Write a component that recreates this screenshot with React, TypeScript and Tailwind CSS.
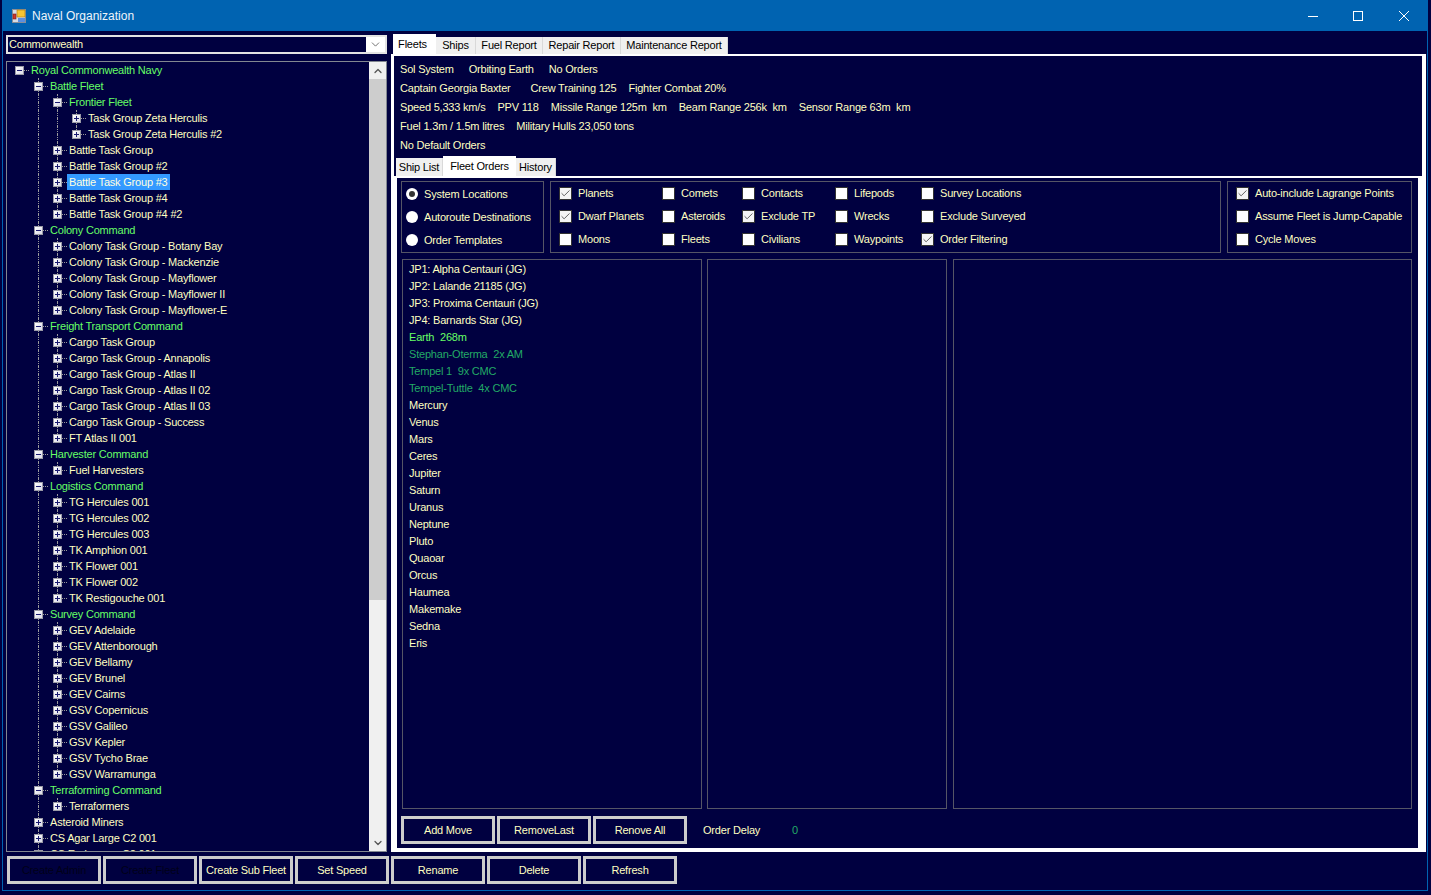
import { Check, ChevronDown, ChevronUp } from "lucide-react";

const font = "font-['Liberation_Sans',Arial,sans-serif]";

type Node = { label: string; depth: number; open?: boolean; green?: boolean; selected?: boolean };

const tree: Node[] = [
  { label: "Royal Commonwealth Navy", depth: 0, open: true, green: true },
  { label: "Battle Fleet", depth: 1, open: true, green: true },
  { label: "Frontier Fleet", depth: 2, open: true, green: true },
  { label: "Task Group Zeta Herculis", depth: 3 },
  { label: "Task Group Zeta Herculis #2", depth: 3 },
  { label: "Battle Task Group", depth: 2 },
  { label: "Battle Task Group #2", depth: 2 },
  { label: "Battle Task Group #3", depth: 2, selected: true },
  { label: "Battle Task Group #4", depth: 2 },
  { label: "Battle Task Group #4 #2", depth: 2 },
  { label: "Colony Command", depth: 1, open: true, green: true },
  { label: "Colony Task Group - Botany Bay", depth: 2 },
  { label: "Colony Task Group - Mackenzie", depth: 2 },
  { label: "Colony Task Group - Mayflower", depth: 2 },
  { label: "Colony Task Group - Mayflower II", depth: 2 },
  { label: "Colony Task Group - Mayflower-E", depth: 2 },
  { label: "Freight Transport Command", depth: 1, open: true, green: true },
  { label: "Cargo Task Group", depth: 2 },
  { label: "Cargo Task Group - Annapolis", depth: 2 },
  { label: "Cargo Task Group - Atlas II", depth: 2 },
  { label: "Cargo Task Group - Atlas II 02", depth: 2 },
  { label: "Cargo Task Group - Atlas II 03", depth: 2 },
  { label: "Cargo Task Group - Success", depth: 2 },
  { label: "FT Atlas II 001", depth: 2 },
  { label: "Harvester Command", depth: 1, open: true, green: true },
  { label: "Fuel Harvesters", depth: 2 },
  { label: "Logistics Command", depth: 1, open: true, green: true },
  { label: "TG Hercules 001", depth: 2 },
  { label: "TG Hercules 002", depth: 2 },
  { label: "TG Hercules 003", depth: 2 },
  { label: "TK Amphion 001", depth: 2 },
  { label: "TK Flower 001", depth: 2 },
  { label: "TK Flower 002", depth: 2 },
  { label: "TK Restigouche 001", depth: 2 },
  { label: "Survey Command", depth: 1, open: true, green: true },
  { label: "GEV Adelaide", depth: 2 },
  { label: "GEV Attenborough", depth: 2 },
  { label: "GEV Bellamy", depth: 2 },
  { label: "GEV Brunel", depth: 2 },
  { label: "GEV Cairns", depth: 2 },
  { label: "GSV Copernicus", depth: 2 },
  { label: "GSV Galileo", depth: 2 },
  { label: "GSV Kepler", depth: 2 },
  { label: "GSV Tycho Brae", depth: 2 },
  { label: "GSV Warramunga", depth: 2 },
  { label: "Terraforming Command", depth: 1, open: true, green: true },
  { label: "Terraformers", depth: 2 },
  { label: "Asteroid Miners", depth: 1 },
  { label: "CS Agar Large C2 001", depth: 1 },
  { label: "CS Endeavour C2 001", depth: 1 },
];

const depthPad = ["pl-[8px]", "pl-[27px]", "pl-[46px]", "pl-[65px]"];
const guideLeft = ["", "left-[31px]", "left-[50px]", "left-[69px]"];

function Expander({ open }: { open?: boolean }) {
  return (
    <span className="relative h-[9px] w-[9px] shrink-0 border border-[#9a9aa6] bg-gradient-to-br from-white to-[#d8d8e6]">
      <span className="absolute left-[1px] top-[3px] h-[1px] w-[5px] bg-[#1a1a70]" />
      {!open && <span className="absolute left-[3px] top-[1px] h-[5px] w-[1px] bg-[#1a1a70]" />}
    </span>
  );
}

function TreeRow({ node, next }: { node: Node; next?: Node }) {
  return (
    <div className={`relative flex h-4 items-center ${depthPad[node.depth]}`}>
      {[1, 2, 3].map((level) =>
        node.depth >= level ? (
          <span key={level}>
            <span className={`absolute top-0 h-1/2 border-l border-dotted border-[#9a9a9a] ${guideLeft[level]}`} />
            {next && next.depth >= level && (
              <span className={`absolute top-1/2 h-1/2 border-l border-dotted border-[#9a9a9a] ${guideLeft[level]}`} />
            )}
          </span>
        ) : null,
      )}
      <Expander open={node.open} />
      <span className="h-[1px] w-[5px] shrink-0 border-t border-dotted border-[#9a9a9a]" />
      <span
        className={`whitespace-nowrap px-[2px] leading-4 ${
          node.selected ? "bg-[#3399ff] text-[#ffffe0]" : node.green ? "text-[#66ff66]" : "text-[#ffffc0]"
        }`}
      >
        {node.label}
      </span>
    </div>
  );
}

function FormButton({ label, dim }: { label: string; dim?: boolean }) {
  return (
    <button
      type="button"
      className={`h-[28px] w-[94px] whitespace-nowrap border-[3px] border-[#cccccc] text-center ${dim ? "text-[#000018]" : "text-[#ffffc0]"}`}
    >
      {label}
    </button>
  );
}

function CheckBox({ label, checked }: { label: string; checked?: boolean }) {
  return (
    <label className="flex h-[23px] items-center gap-[6px] whitespace-nowrap text-[#ffffc0]">
      <span className={`flex h-[13px] w-[13px] shrink-0 items-center justify-center border border-[#333333] ${checked ? "bg-[#f4f4f4]" : "bg-white"}`}>
        {checked && <Check size={11} strokeWidth={1.8} className="text-[#444444]" />}
      </span>
      {label}
    </label>
  );
}

function Radio({ label, checked }: { label: string; checked?: boolean }) {
  return (
    <label className="flex h-[23px] items-center gap-[6px] whitespace-nowrap text-[#ffffc0]">
      <span className="-mt-[1px] flex h-[12px] w-[12px] shrink-0 items-center justify-center rounded-full bg-white">
        {checked && <span className="h-[6px] w-[6px] rounded-full bg-[#333333]" />}
      </span>
      {label}
    </label>
  );
}

function MainTab({ label, active, w }: { label: string; active?: boolean; w: string }) {
  return (
    <div
      className={`flex items-center justify-center whitespace-nowrap text-black ${w} ${
        active ? "z-10 -mb-[1px] h-[21px] bg-white pb-[1px] pr-[4px]" : "h-[17px] border-r border-[#d9d9d9] bg-[#f0f0f0]"
      }`}
    >
      {label}
    </div>
  );
}

function SubTab({ label, active, w }: { label: string; active?: boolean; w: string }) {
  return (
    <div
      className={`flex items-center justify-center whitespace-nowrap text-black ${w} ${
        active ? "z-10 -mb-[2px] h-[22px] bg-white pb-[2px]" : "h-[18px] border-r border-[#d9d9d9] bg-[#f0f0f0]"
      }`}
    >
      {label}
    </div>
  );
}

const yellow = "text-[#ffffc0]";
const bright = "text-[#66ff66]";
const dark = "text-[#22aa66]";

const systemBodies: [string, string][] = [
  ["JP1: Alpha Centauri (JG)", yellow],
  ["JP2: Lalande 21185 (JG)", yellow],
  ["JP3: Proxima Centauri (JG)", yellow],
  ["JP4: Barnards Star (JG)", yellow],
  ["Earth  268m", bright],
  ["Stephan-Oterma  2x AM", dark],
  ["Tempel 1  9x CMC", dark],
  ["Tempel-Tuttle  4x CMC", dark],
  ["Mercury", yellow],
  ["Venus", yellow],
  ["Mars", yellow],
  ["Ceres", yellow],
  ["Jupiter", yellow],
  ["Saturn", yellow],
  ["Uranus", yellow],
  ["Neptune", yellow],
  ["Pluto", yellow],
  ["Quaoar", yellow],
  ["Orcus", yellow],
  ["Haumea", yellow],
  ["Makemake", yellow],
  ["Sedna", yellow],
  ["Eris", yellow],
];

export default function App() {
  return (
    <div className={`h-[895px] w-[1431px] overflow-hidden bg-[#000040] pl-[2px] text-[11px] tracking-[-0.2px] ${font}`}>
      <div className="flex h-[891px] w-[1426px] flex-col border-x border-b border-[#0063b1]">
        {/* title bar */}
        <div className="flex h-[31px] shrink-0 items-center bg-[#0063b1] pl-[9px] text-[12px] tracking-normal text-[#eef4fa]">
          <svg width="14" height="14" viewBox="0 0 14 14" className="shrink-0">
            <rect x="0.5" y="0.5" width="13" height="13" fill="#d8dce4" stroke="#8a8f98" />
            <rect x="5" y="1" width="8" height="7" fill="#f7c531" stroke="#a87a10" strokeWidth="0.6" />
            <rect x="1" y="5" width="3" height="5" fill="#d0342c" stroke="#70201c" strokeWidth="0.6" />
            <rect x="6" y="9" width="7" height="4" fill="#5a8fe0" />
          </svg>
          <span className="ml-[6px]">Naval Organization</span>
          <div className="ml-auto flex items-center text-white">
            <div className="flex w-[46px] justify-center">
              <svg width="10" height="10" viewBox="0 0 10 10" className="ml-[1px]"><path d="M0 5.5h10" stroke="currentColor" /></svg>
            </div>
            <div className="flex w-[46px] justify-center">
              <svg width="10" height="10" viewBox="0 0 10 10"><rect x="0.5" y="0.5" width="9" height="9" fill="none" stroke="currentColor" /></svg>
            </div>
            <div className="flex w-[46px] justify-center">
              <svg width="10" height="10" viewBox="0 0 10 10"><path d="M0 0l10 10M10 0L0 10" stroke="currentColor" /></svg>
            </div>
          </div>
        </div>

        <div className="flex h-[821px] shrink-0 pl-[3px] pr-[1px]">
          {/* left column */}
          <div className="flex w-[381px] shrink-0 flex-col pt-[4px]">
            <div className="flex h-[19px] shrink-0 items-center border-2 border-[#e3e3e3] text-[#ffffc0]">
              <span className="flex-1 pl-[1px]">Commonwealth</span>
              <span className="flex h-full w-[19px] items-center justify-center bg-white">
                <ChevronDown size={13} strokeWidth={1.5} className="text-[#555555]" />
              </span>
            </div>
            <div className="mt-[7px] flex min-h-0 flex-1 border border-[#828790]">
              <div className="min-w-0 flex-1 overflow-hidden">
                {tree.map((node, i) => (
                  <TreeRow key={node.label} node={node} next={tree[i + 1]} />
                ))}
              </div>
              <div className="flex w-[17px] shrink-0 flex-col bg-[#f0f0f0]">
                <div className="flex h-[17px] items-center justify-center">
                  <ChevronUp size={12} strokeWidth={2.5} className="text-[#555555]" />
                </div>
                <div className="h-[521px] bg-[#cdcdcd]" />
                <div className="flex-1" />
                <div className="flex h-[17px] items-center justify-center">
                  <ChevronDown size={12} strokeWidth={2.5} className="text-[#555555]" />
                </div>
              </div>
            </div>
          </div>

          {/* right column */}
          <div className="ml-[4px] flex w-[1035px] shrink-0 flex-col pt-[3px]">
            <div className="flex h-[20px] shrink-0 items-end pl-[2px]">
              <MainTab label="Fleets" active w="w-[43px]" />
              <MainTab label="Ships" w="w-[40px]" />
              <MainTab label="Fuel Report" w="w-[67px]" />
              <MainTab label="Repair Report" w="w-[78px]" />
              <MainTab label="Maintenance Report" w="w-[107px]" />
            </div>
            <div className="flex min-h-0 flex-1 flex-col border-y-2 border-l-[3px] border-r-[4px] border-white">
              <div className="flex h-[100px] shrink-0 flex-col whitespace-pre pl-[6px] pt-[4px] text-[#ffffc0]">
                <div className="flex h-[19px] items-center gap-[15px]"><span>Sol System</span><span>Orbiting Earth</span><span>No Orders</span></div>
                <div className="flex h-[19px] items-center"><span>Captain Georgia Baxter</span><span className="ml-[20px]">Crew Training 125</span><span className="ml-[12px]">Fighter Combat 20%</span></div>
                <div className="flex h-[19px] items-center gap-[12px]"><span>Speed 5,333 km/s</span><span>PPV 118</span><span>Missile Range 125m  km</span><span>Beam Range 256k  km</span><span>Sensor Range 63m  km</span></div>
                <div className="flex h-[19px] items-center gap-[12px]"><span>Fuel 1.3m / 1.5m litres</span><span>Military Hulls 23,050 tons</span></div>
                <div className="flex h-[19px] items-center"><span>No Default Orders</span></div>
              </div>
              <div className="flex h-[20px] shrink-0 items-end pl-[2px]">
                <SubTab label="Ship List" w="w-[47px]" />
                <SubTab label="Fleet Orders" active w="w-[73px]" />
                <SubTab label="History" w="w-[40px]" />
              </div>
              <div className="flex min-h-0 flex-1 flex-col border-y-2 border-l-[3px] border-r-[4px] border-white pl-[4px] pt-[3px]">
                <div className="flex h-[72px] shrink-0 gap-[6px]">
                  <div className="w-[143px] border border-[#555566] pl-[4px] pt-[1px]">
                    <Radio label="System Locations" checked />
                    <Radio label="Autoroute Destinations" />
                    <Radio label="Order Templates" />
                  </div>
                  <div className="flex w-[671px] border border-[#555566] pl-[8px]">
                    <div className="w-[103px]"><CheckBox label="Planets" checked /><CheckBox label="Dwarf Planets" checked /><CheckBox label="Moons" /></div>
                    <div className="w-[80px]"><CheckBox label="Comets" /><CheckBox label="Asteroids" /><CheckBox label="Fleets" /></div>
                    <div className="w-[93px]"><CheckBox label="Contacts" /><CheckBox label="Exclude TP" checked /><CheckBox label="Civilians" /></div>
                    <div className="w-[86px]"><CheckBox label="Lifepods" /><CheckBox label="Wrecks" /><CheckBox label="Waypoints" /></div>
                    <div><CheckBox label="Survey Locations" /><CheckBox label="Exclude Surveyed" /><CheckBox label="Order Filtering" checked /></div>
                  </div>
                  <div className="w-[185px] border border-[#555566] pl-[8px]">
                    <CheckBox label="Auto-include Lagrange Points" checked />
                    <CheckBox label="Assume Fleet is Jump-Capable" />
                    <CheckBox label="Cycle Moves" />
                  </div>
                </div>
                <div className="mt-[6px] flex h-[550px] shrink-0 gap-[5px] pl-[1px]">
                  <div className="w-[300px] border border-[#555566] pl-[6px] pt-[1px]">
                    {systemBodies.map(([name, color]) => (
                      <div key={name} className={`h-[17px] whitespace-pre leading-[17px] ${color}`}>{name}</div>
                    ))}
                  </div>
                  <div className="w-[240px] border border-[#555566]" />
                  <div className="ml-[1px] w-[459px] border border-[#555566]" />
                </div>
                <div className="mt-[7px] flex items-center gap-[2px] text-[#ffffc0]">
                  <FormButton label="Add Move" />
                  <FormButton label="RemoveLast" />
                  <FormButton label="Renove All" />
                  <span className="ml-[14px] w-[87px]">Order Delay</span>
                  <span className="text-[#22aa66]">0</span>
                </div>
              </div>
            </div>
          </div>
        </div>

        <div className="flex gap-[2px] pl-[4px] pt-[4px]">
          <FormButton label="Create Admin" dim />
          <FormButton label="Create Fleet" dim />
          <FormButton label="Create Sub Fleet" />
          <FormButton label="Set Speed" />
          <FormButton label="Rename" />
          <FormButton label="Delete" />
          <FormButton label="Refresh" />
        </div>
      </div>
    </div>
  );
}
